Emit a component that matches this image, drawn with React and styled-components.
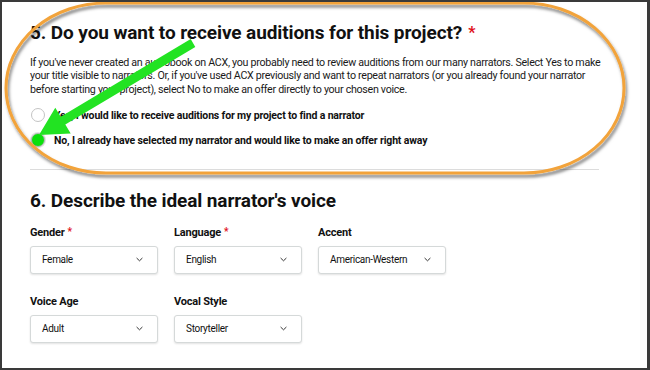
import React from "react";
import styled, { createGlobalStyle } from "styled-components";

const Global = createGlobalStyle`
  html, body { margin: 0; padding: 0; background: #fff; }
  body {
    font-family: Roboto, "Liberation Sans", sans-serif;
    color: #111;
    -webkit-font-smoothing: antialiased;
  }
`;

const Frame = styled.div`
  position: relative;
  width: 650px;
  height: 370px;
  box-sizing: border-box;
  border-style: solid;
  border-color: #3a3a3a;
  border-width: 2px 3px 2px 2px;
  padding: 0 0 0 28px;
  overflow: hidden;
  background: #fff;
`;

const Section = styled.section`
  display: flex;
  flex-direction: column;
  width: 575px;
`;

const Heading = styled.h2`
  margin: ${(p) => p.$top}px 0 0;
  font-size: 19px;
  line-height: 22px;
  font-weight: 700;
  letter-spacing: -0.1px;
  color: #111;
  white-space: nowrap;
`;

const Req = styled.span`
  color: #e0101a;
  font-size: ${(p) => p.$size}px;
  margin-left: ${(p) => p.$gap}px;
  vertical-align: top;
  position: relative;
  top: ${(p) => p.$raise}px;
`;

const Para = styled.p`
  margin: 12px 0 0;
  font-size: 10.7px;
  line-height: 13.3px;
  letter-spacing: -0.3px;
  color: #1a1a1a;
  width: 575px;
`;

const RadioGroup = styled.div`
  display: flex;
  flex-direction: column;
  margin-top: 7px;
`;

const RadioRow = styled.label`
  display: flex;
  align-items: center;
  height: 25px;
  gap: 9px;
  font-size: 10.5px;
  letter-spacing: -0.15px;
  font-weight: 700;
  color: #111;
`;

const RadioDot = styled.span`
  box-sizing: border-box;
  width: 14px;
  height: 14px;
  margin-left: 1px;
  border-radius: 50%;
  flex: none;
  border: 1.5px solid ${(p) => (p.$checked ? "#b9b9b9" : "#c4c4c4")};
  background: ${(p) => (p.$checked ? "#0be00b" : "#fff")};
  box-shadow: ${(p) => (p.$checked ? "0 0 0 1px #e2e2e2" : "none")};
`;

const Divider = styled.hr`
  margin: 16px 0 0;
  border: 0;
  border-top: 1px solid #dcdcdc;
  width: 569px;
`;

const FormGrid = styled.div`
  display: grid;
  grid-template-columns: repeat(3, 128px);
  column-gap: 16px;
  row-gap: 21px;
  margin-top: 14px;
`;

const Field = styled.div`
  display: flex;
  flex-direction: column;
  gap: 6px;
`;

const Label = styled.div`
  font-size: 11px;
  line-height: 14px;
  font-weight: 700;
  letter-spacing: -0.2px;
  color: #111;
`;

const Select = styled.div`
  box-sizing: border-box;
  height: 28px;
  display: flex;
  align-items: center;
  justify-content: space-between;
  padding: 0 14px 0 11px;
  border: 1px solid #d5d9d9;
  border-radius: 3px;
  box-shadow: 0 1px 2px rgba(15, 17, 17, 0.12);
  font-size: 10px;
  letter-spacing: -0.3px;
  color: #111;
  background: #fff;
`;

const Overlay = styled.svg`
  position: absolute;
  left: -2px;
  top: -2px;
  width: 650px;
  height: 370px;
  pointer-events: none;
`;

const Chevron = () => (
  <svg width="7" height="5" viewBox="0 0 7 5">
    <path d="M0.6 1 L3.5 3.8 L6.4 1" fill="none" stroke="#333" strokeWidth="1" />
  </svg>
);

const fields = [
  { label: "Gender", req: true, value: "Female" },
  { label: "Language", req: true, value: "English" },
  { label: "Accent", value: "American-Western" },
  { label: "Voice Age", value: "Adult" },
  { label: "Vocal Style", value: "Storyteller" },
];

export default function App() {
  return (
    <>
      <Global />
      <Frame>
        <Section>
          <Heading $top={20}>
            5. Do you want to receive auditions for this project?
            <Req $size={16} $gap={6} $raise={0}>*</Req>
          </Heading>
          <Para>
            If you've never created an audiobook on ACX, you probably need to review auditions from our
            many narrators. Select Yes to make your title visible to narrators. Or, if you've used ACX
            previously and want to repeat narrators (or you already found your narrator before starting
            your project), select No to make an offer directly to your chosen voice.
          </Para>
          <RadioGroup>
            <RadioRow>
              <RadioDot />
              Yes, I would like to receive auditions for my project to find a narrator
            </RadioRow>
            <RadioRow>
              <RadioDot $checked />
              No, I already have selected my narrator and would like to make an offer right away
            </RadioRow>
          </RadioGroup>
          <Divider />
          <Heading $top={20}>6. Describe the ideal narrator's voice</Heading>
          <FormGrid>
            {fields.map((f) => (
              <Field key={f.label}>
                <Label>
                  {f.label}
                  {f.req && (
                    <Req $size={10} $gap={3} $raise={-1}>
                      *
                    </Req>
                  )}
                </Label>
                <Select>
                  <span>{f.value}</span>
                  <Chevron />
                </Select>
              </Field>
            ))}
          </FormGrid>
        </Section>
        <Overlay viewBox="0 0 650 370">
          <defs>
            <filter id="sh" x="-5%" y="-5%" width="110%" height="115%">
              <feDropShadow dx="1.5" dy="3" stdDeviation="1.4" floodColor="#000" floodOpacity="0.5" />
            </filter>
          </defs>
          <rect
            x="6"
            y="3"
            width="618"
            height="170"
            rx="100"
            ry="85"
            fill="none"
            stroke="#f2a33a"
            strokeWidth="3"
            filter="url(#sh)"
          />
          <polygon
            points="190.7,39.1 60.7,116.7 55.3,107.7 39,135 70.7,133.5 65.3,124.5 195.3,46.9"
            fill="#22e322"
          />
        </Overlay>
      </Frame>
    </>
  );
}
